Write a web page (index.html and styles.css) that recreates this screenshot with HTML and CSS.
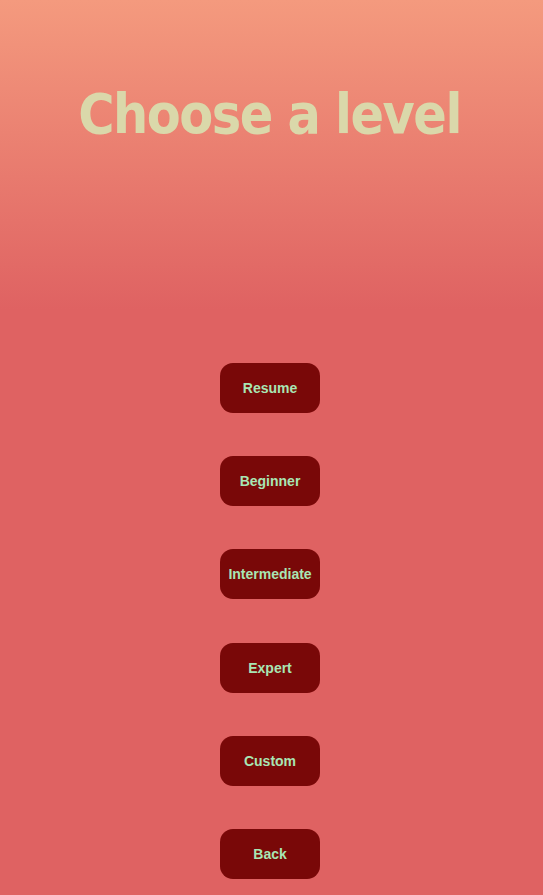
FILE: index.html
```html
<!DOCTYPE html>
<html>
<head>
<meta charset="utf-8">
<link rel="stylesheet" href="styles.css">
</head>
<body>
<div class="screen">
  <h1 class="title">Choose a level</h1>
  <div class="menu">
    <button class="btn">Resume</button>
    <button class="btn">Beginner</button>
    <button class="btn">Intermediate</button>
    <button class="btn">Expert</button>
    <button class="btn">Custom</button>
    <button class="btn">Back</button>
  </div>
</div>
</body>
</html>
```
FILE: styles.css
```css
html, body {
  margin: 0;
  padding: 0;
  height: 100%;
}
body {
  background: #df6262;
  overflow: hidden;
}
.screen {
  height: 895px;
  background: linear-gradient(to bottom, #f49a7e 0px, #df6262 310px, #df6262 100%);
  display: flex;
  flex-direction: column;
  align-items: center;
}
.title {
  margin: 81px 0 0 -4px;
  height: 282px;
  font-family: "DejaVu Sans Condensed", "DejaVu Sans", Verdana, sans-serif;
  font-stretch: condensed;
  font-weight: bold;
  font-size: 55px;
  line-height: 66px;
  color: #dad8aa;
  letter-spacing: -1.5px;
  text-align: center;
}
.menu {
  display: flex;
  flex-direction: column;
  gap: 43.2px;
  align-items: center;
  margin-left: -3px;
}
.btn {
  width: 100px;
  height: 50px;
  border: none;
  border-radius: 13px;
  background: #790808;
  color: #a8e6b4;
  font-family: "Liberation Sans", Arial, sans-serif;
  font-weight: bold;
  font-size: 14px;
  padding: 0;
}
```
